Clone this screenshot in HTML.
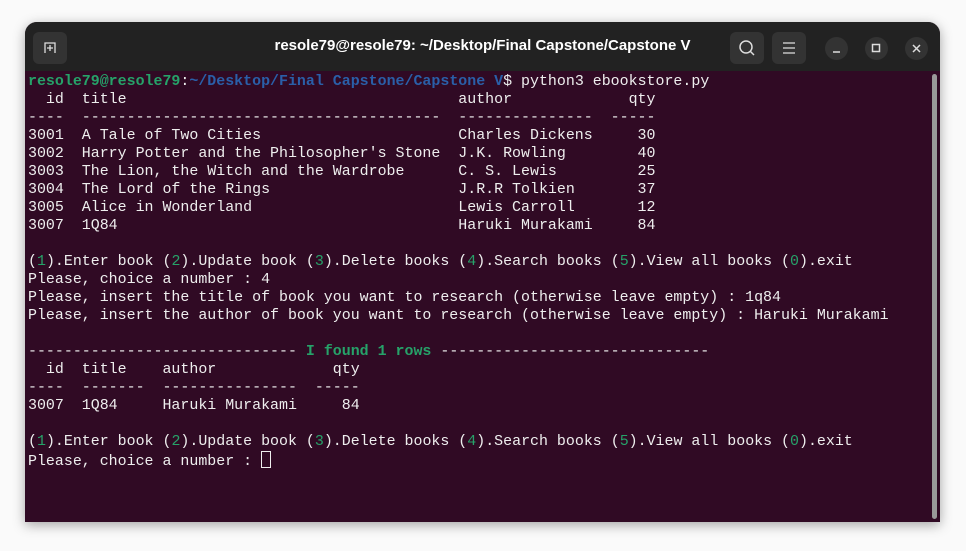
<!DOCTYPE html>
<html><head><style>
body{margin:0;width:966px;height:551px;background:#fafafa;overflow:hidden;position:relative}
.win{position:absolute;left:25px;top:22px;width:915px;height:500px;background:#300a24;border-radius:12px 12px 0 0;overflow:hidden;box-shadow:0 3px 12px rgba(0,0,0,.35)}
.tb{position:absolute;left:0;top:0;width:915px;height:49px;background:#222;color:#fff;font:bold 15px "Liberation Sans",sans-serif}
.tb .t{position:absolute;left:0;top:15px;text-align:center;width:915px}
.bt{position:absolute;top:10px;width:34px;height:32px;background:#333;border-radius:6px}
.ci{position:absolute;top:15px;width:23px;height:23px;background:#333;border-radius:50%}
pre{position:absolute;left:3px;top:51px;margin:0;font:14.95px/18px "Liberation Mono",monospace;color:#eee}
.g{color:#26a269;font-weight:bold}.b{color:#2a5fa8;font-weight:bold}.n{color:#26a269}
.sb{position:absolute;right:3px;top:52px;width:5px;height:445px;background:#999;border-radius:3px}
.cur{display:inline-block;width:8px;height:15px;border:1px solid #eee;vertical-align:-3px}
</style></head><body>
<div class="win">
<div class="tb">
<div class="bt" style="left:8px"><svg width="34" height="32"><path d="M12 21V11h10v10M17 13v6M14 16h6" stroke="#ddd" stroke-width="1.3" fill="none"/></svg></div>
<div class="t">resole79@resole79: ~/Desktop/Final Capstone/Capstone V</div>
<div class="bt" style="left:705px"><svg width="34" height="32"><circle cx="16" cy="15" r="6" stroke="#ddd" stroke-width="1.5" fill="none"/><path d="M20 19l4 4" stroke="#ddd" stroke-width="1.5"/></svg></div>
<div class="bt" style="left:747px"><svg width="34" height="32"><path d="M11 11h12M11 16h12M11 21h12" stroke="#ddd" stroke-width="1.3"/></svg></div>
<div class="ci" style="left:800px"><svg width="23" height="23"><path d="M8 15h7" stroke="#ddd" stroke-width="1.5"/></svg></div>
<div class="ci" style="left:840px"><svg width="23" height="23"><rect x="7.5" y="7.5" width="7" height="7" stroke="#ddd" stroke-width="1.5" fill="none"/></svg></div>
<div class="ci" style="left:880px"><svg width="23" height="23"><path d="M8 8l7 7M15 8l-7 7" stroke="#ddd" stroke-width="1.5"/></svg></div>
</div>
<div class="sb"></div>
<pre><span class="g">resole79@resole79</span>:<span class="b">~/Desktop/Final Capstone/Capstone V</span>$ python3 ebookstore.py
  id  title                                     author             qty
----  ----------------------------------------  ---------------  -----
3001  A Tale of Two Cities                      Charles Dickens     30
3002  Harry Potter and the Philosopher's Stone  J.K. Rowling        40
3003  The Lion, the Witch and the Wardrobe      C. S. Lewis         25
3004  The Lord of the Rings                     J.R.R Tolkien       37
3005  Alice in Wonderland                       Lewis Carroll       12
3007  1Q84                                      Haruki Murakami     84

(<span class="n">1</span>).Enter book (<span class="n">2</span>).Update book (<span class="n">3</span>).Delete books (<span class="n">4</span>).Search books (<span class="n">5</span>).View all books (<span class="n">0</span>).exit
Please, choice a number : 4
Please, insert the title of book you want to research (otherwise leave empty) : 1q84
Please, insert the author of book you want to research (otherwise leave empty) : Haruki Murakami

------------------------------ <span class="g">I found 1 rows</span> ------------------------------
  id  title    author             qty
----  -------  ---------------  -----
3007  1Q84     Haruki Murakami     84

(<span class="n">1</span>).Enter book (<span class="n">2</span>).Update book (<span class="n">3</span>).Delete books (<span class="n">4</span>).Search books (<span class="n">5</span>).View all books (<span class="n">0</span>).exit
Please, choice a number : <span class="cur"></span></pre>
</div>
</body></html>
